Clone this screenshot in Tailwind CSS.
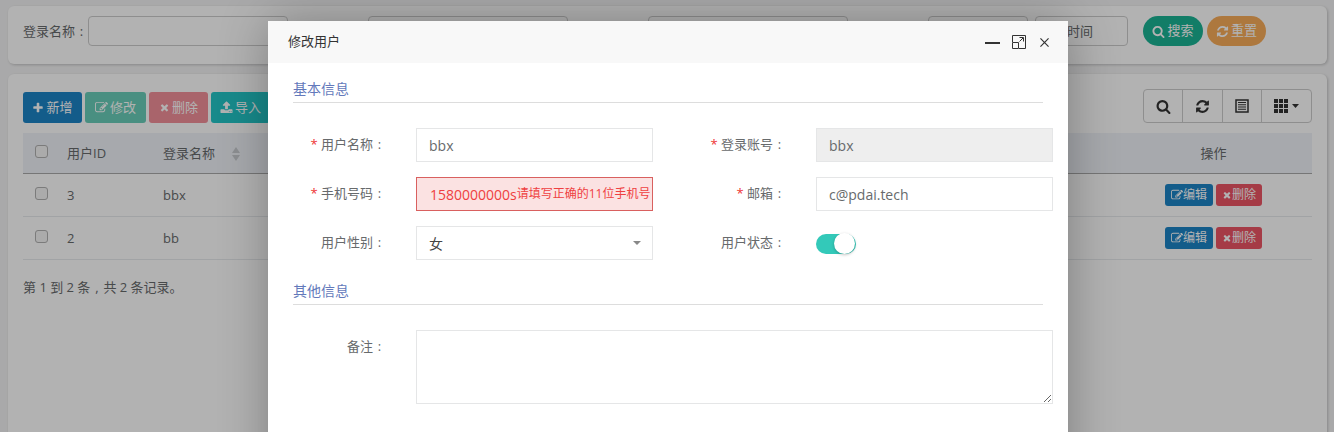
<!DOCTYPE html>
<html lang="zh-CN">
<head>
  <meta charset="UTF-8" />
  <title>修改用户</title>
  <script src="https://cdn.jsdelivr.net/npm/@tailwindcss/browser@4"></script>
</head>
<body class="relative h-[432px] overflow-hidden bg-[#f3f3f4] font-['Open_Sans','Noto_Sans_CJK_SC',sans-serif] text-[13px] text-[#676a6c]">
  <!-- page behind the dialog -->
  <div class="px-[8px] pt-[6px] pr-[7px]">
    <div class="flex h-[58px] items-start rounded-[6px] bg-white px-[15px] pt-[10px] shadow-[1px_1px_3px_rgba(0,0,0,0.2)]">
      <label class="w-[65px] leading-[30px] whitespace-nowrap">登录名称<span class="inline-block w-[13px] text-center">:</span></label>
      <input class="h-[30px] w-[200px] rounded-[4px] border border-[#ccc]" />
      <input class="ml-[80px] h-[30px] w-[200px] rounded-[4px] border border-[#ccc]" />
      <input class="ml-[80px] h-[30px] w-[200px] rounded-[4px] border border-[#ccc]" />
      <div class="ml-[80px] h-[30px] w-[100px] rounded-[4px] border border-[#ccc]"></div>
      <div class="ml-[7px] h-[30px] w-[93px] rounded-[4px] border border-[#ccc] px-[5px] leading-[28px]">结束时间</div>
      <button class="ml-[15px] flex h-[30px] w-[60px] items-center justify-center gap-[2px] rounded-full bg-[#1ab394] text-white">
        <svg class="h-[13px] w-[13px]" viewBox="0 0 1792 1792" fill="currentColor"><path d="M1216 832q0-185-131.5-316.5t-316.5-131.5-316.5 131.5-131.5 316.5 131.5 316.5 316.5 131.5 316.5-131.5 131.5-316.5zm512 832q0 52-38 90t-90 38q-54 0-90-38l-343-342q-179 124-399 124-143 0-273.5-55.5t-225-150-150-225-55.5-273.5 55.5-273.5 150-225 225-150 273.5-55.5 273.5 55.5 225 150 150 225 55.5 273.5q0 220-124 399l343 343q37 37 37 90z"/></svg>搜索
      </button>
      <button class="ml-[4px] flex h-[30px] w-[59px] items-center justify-center gap-[2px] rounded-full bg-[#f8ac59] text-white">
        <svg class="h-[13px] w-[13px]" viewBox="0 0 1792 1792" fill="currentColor"><path d="M1639 1056q0 5-1 7-64 268-268 434.5t-478 166.5q-146 0-282.5-55t-243.5-157l-129 129q-19 19-45 19t-45-19-19-45v-448q0-26 19-45t45-19h448q26 0 45 19t19 45-19 45l-137 137q71 66 161 102t187 36q134 0 250-65t186-179q11-17 53-117 8-23 30-23h192q13 0 22.5 9.5t9.5 22.5zm25-800v448q0 26-19 45t-45 19h-448q-26 0-45-19t-19-45 19-45l138-138q-148-137-349-137-134 0-250 65t-186 179q-11 17-53 117-8 23-30 23h-199q-13 0-22.5-9.5t-9.5-22.5v-7q65-268 270-434.5t480-166.5q146 0 284 55.5t245 156.5l130-129q19-19 45-19t45 19 19 45z"/></svg>重置
      </button>
    </div>

    <div class="mt-[10px] h-[400px] rounded-[6px] bg-white px-[15px] pt-[15px] shadow-[1px_1px_3px_rgba(0,0,0,0.2)]">
      <div class="flex h-[34px] items-start">
        <div class="mt-[3px] flex gap-[3px] text-white">
          <button class="flex h-[31px] w-[59px] items-center justify-center gap-[2px] rounded-[3px] bg-[#1c84c6]">
            <svg class="h-[12px] w-[12px]" viewBox="0 0 1792 1792" fill="currentColor"><path d="M1600 736v192q0 40-28 68t-68 28h-416v416q0 40-28 68t-68 28h-192q-40 0-68-28t-28-68v-416h-416q-40 0-68-28t-28-68v-192q0-40 28-68t68-28h416v-416q0-40 28-68t68-28h192q40 0 68 28t28 68v416h416q40 0 68 28t28 68z"/></svg>新增
          </button>
          <button class="flex h-[31px] w-[61px] items-center justify-center gap-[2px] rounded-[3px] bg-[#1ab394] opacity-65">
            <svg class="h-[13px] w-[13px]" viewBox="0 0 1792 1792" fill="currentColor"><path d="M888 1184l116-116-152-152-116 116v56h96v96h56zm440-720q-16-16-33 1l-350 350q-17 17-1 33t33-1l350-350q17-17 1-33zm80 594v190q0 119-84.5 203.5t-203.5 84.5h-832q-119 0-203.5-84.5t-84.5-203.5v-832q0-119 84.5-203.5t203.5-84.5h832q63 0 117 25 15 7 18 23 3 17-9 29l-49 49q-14 14-32 8-23-6-45-6h-832q-66 0-113 47t-47 113v832q0 66 47 113t113 47h832q66 0 113-47t47-113v-126q0-13 9-22l64-64q15-15 35-7t20 29zm-96-738l288 288-672 672h-288v-288zm444 132l-92 92-288-288 92-92q28-28 68-28t68 28l152 152q28 28 28 68t-28 68z"/></svg>修改
          </button>
          <button class="flex h-[31px] w-[59px] items-center justify-center gap-[2px] rounded-[3px] bg-[#ed5565] opacity-65">
            <svg class="h-[11px] w-[11px]" viewBox="0 0 1792 1792" fill="currentColor"><path d="M1490 1322q0 40-28 68l-136 136q-28 28-68 28t-68-28l-294-294-294 294q-28 28-68 28t-68-28l-136-136q-28-28-28-68t28-68l294-294-294-294q-28-28-28-68t28-68l136-136q28-28 68-28t68 28l294 294 294-294q28-28 68-28t68 28l136 136q28 28 28 68t-28 68l-294 294 294 294q28 28 28 68z"/></svg>删除
          </button>
          <button class="flex h-[31px] w-[59px] items-center justify-center gap-[2px] rounded-[3px] bg-[#23c6c8]">
            <svg class="h-[13px] w-[13px]" viewBox="0 0 1792 1792" fill="currentColor"><path d="M1344 1472q0-26-19-45t-45-19-45 19-19 45 19 45 45 19 45-19 19-45zm256 0q0-26-19-45t-45-19-45 19-19 45 19 45 45 19 45-19 19-45zm128-224v320q0 40-28 68t-68 28h-1472q-40 0-68-28t-28-68v-320q0-40 28-68t68-28h427q21 56 70.5 92t110.5 36h256q61 0 110.5-36t70.5-92h427q40 0 68 28t28 68zm-325-648q-17 40-59 40h-256v448q0 26-19 45t-45 19h-256q-26 0-45-19t-19-45v-448h-256q-42 0-59-40-17-39 14-69l448-448q18-19 45-19t45 19l448 448q31 30 14 69z"/></svg>导入
          </button>
        </div>
        <div class="ml-auto flex h-[34px] rounded-[4px] border border-[#ccc] text-[#333]">
          <div class="flex w-[38px] items-center justify-center">
            <svg class="h-[15px] w-[15px]" viewBox="0 0 1792 1792" fill="currentColor"><path d="M1216 832q0-185-131.5-316.5t-316.5-131.5-316.5 131.5-131.5 316.5 131.5 316.5 316.5 131.5 316.5-131.5 131.5-316.5zm512 832q0 52-38 90t-90 38q-54 0-90-38l-343-342q-179 124-399 124-143 0-273.5-55.5t-225-150-150-225-55.5-273.5 55.5-273.5 150-225 225-150 273.5-55.5 273.5 55.5 225 150 150 225 55.5 273.5q0 220-124 399l343 343q37 37 37 90z"/></svg>
          </div>
          <div class="flex w-[40px] items-center justify-center border-l border-[#ccc]">
            <svg class="h-[15px] w-[15px]" viewBox="0 0 1792 1792" fill="currentColor"><path d="M1639 1056q0 5-1 7-64 268-268 434.5t-478 166.5q-146 0-282.5-55t-243.5-157l-129 129q-19 19-45 19t-45-19-19-45v-448q0-26 19-45t45-19h448q26 0 45 19t19 45-19 45l-137 137q71 66 161 102t187 36q134 0 250-65t186-179q11-17 53-117 8-23 30-23h192q13 0 22.5 9.5t9.5 22.5zm25-800v448q0 26-19 45t-45 19h-448q-26 0-45-19t-19-45 19-45l138-138q-148-137-349-137-134 0-250 65t-186 179q-11 17-53 117-8 23-30 23h-199q-13 0-22.5-9.5t-9.5-22.5v-7q65-268 270-434.5t480-166.5q146 0 284 55.5t245 156.5l130-129q19-19 45-19t45 19 19 45z"/></svg>
          </div>
          <div class="flex w-[39px] items-center justify-center border-l border-[#ccc]">
            <svg class="h-[14px] w-[14px]" viewBox="0 0 14 14" fill="none" stroke="currentColor"><rect x="1" y="1" width="12" height="12" stroke-width="1.5"/><path d="M3 3.500h8M3 5.750h8M3 8h8M3 10.250h8" stroke-width="1.200"/></svg>
          </div>
          <div class="flex w-[50px] items-center justify-center gap-[4px] border-l border-[#ccc]">
            <svg class="h-[14px] w-[14px]" viewBox="0 0 14 14" fill="currentColor"><path d="M0 0h4v4H0zM5 0h4v4H5zM10 0h4v4h-4zM0 5h4v4H0zM5 5h4v4H5zM10 5h4v4h-4zM0 10h4v4H0zM5 10h4v4H5zM10 10h4v4h-4z"/></svg>
            <svg class="h-[4px] w-[7px]" viewBox="0 0 7 4" fill="currentColor"><path d="M0 0h7L3.500 4z"/></svg>
          </div>
        </div>
      </div>

      <table class="mt-[10px] w-[1289px] table-fixed border-collapse">
        <thead>
          <tr class="h-[40px] border-b border-[#aaa] bg-[#eff3f8] text-left">
            <th class="w-[36px] pl-[12px] font-normal"><input type="checkbox" class="mt-[-3px] block h-[13px] w-[13px] appearance-none rounded-[3px] border border-[#b0b0b0] bg-[#f5f5f5]" /></th>
            <th class="w-[96px] px-[8px] pt-[2px] font-normal">用户ID</th>
            <th class="w-[100px] px-[8px] pt-[2px] font-normal">
              <span class="flex items-center gap-[17px] whitespace-nowrap">登录名称
                <svg class="h-[14px] w-[8px]" viewBox="0 0 8 14" fill="#c9ccd0"><path d="M4 0l4 6H0zM0 8h8l-4 6z"/></svg>
              </span>
            </th>
            <th class="font-normal"></th>
            <th class="w-[197px] pt-[2px] text-center font-normal">操作</th>
          </tr>
        </thead>
        <tbody>
          <tr class="h-[43px] border-b border-[#e7eaec]">
            <td class="pl-[12px]"><input type="checkbox" class="mt-[-3px] block h-[13px] w-[13px] appearance-none rounded-[3px] border border-[#b0b0b0] bg-[#f5f5f5]" /></td>
            <td class="px-[8px] pt-[2px]">3</td>
            <td class="px-[8px] pt-[2px]">bbx</td>
            <td></td>
            <td class="pt-[1px]">
              <div class="flex justify-center gap-[3px] text-[12px] text-white">
                <span class="flex h-[22px] w-[48px] items-center justify-center rounded-[3px] bg-[#1c84c6]">
                  <svg class="h-[12px] w-[12px]" viewBox="0 0 1792 1792" fill="currentColor"><path d="M888 1184l116-116-152-152-116 116v56h96v96h56zm440-720q-16-16-33 1l-350 350q-17 17-1 33t33-1l350-350q17-17 1-33zm80 594v190q0 119-84.5 203.5t-203.5 84.5h-832q-119 0-203.5-84.5t-84.5-203.5v-832q0-119 84.5-203.5t203.5-84.5h832q63 0 117 25 15 7 18 23 3 17-9 29l-49 49q-14 14-32 8-23-6-45-6h-832q-66 0-113 47t-47 113v832q0 66 47 113t113 47h832q66 0 113-47t47-113v-126q0-13 9-22l64-64q15-15 35-7t20 29zm-96-738l288 288-672 672h-288v-288zm444 132l-92 92-288-288 92-92q28-28 68-28t68 28l152 152q28 28 28 68t-28 68z"/></svg>编辑
                </span>
                <span class="flex h-[22px] w-[46px] items-center justify-center rounded-[3px] bg-[#ed5565]">
                  <svg class="h-[10px] w-[10px]" viewBox="0 0 1792 1792" fill="currentColor"><path d="M1490 1322q0 40-28 68l-136 136q-28 28-68 28t-68-28l-294-294-294 294q-28 28-68 28t-68-28l-136-136q-28-28-28-68t28-68l294-294-294-294q-28-28-28-68t28-68l136-136q28-28 68-28t68 28l294 294 294-294q28-28 68-28t68 28l136 136q28 28 28 68t-28 68l-294 294 294 294q28 28 28 68z"/></svg>删除
                </span>
              </div>
            </td>
          </tr>
          <tr class="h-[43px] border-b border-[#e7eaec]">
            <td class="pl-[12px]"><input type="checkbox" class="mt-[-3px] block h-[13px] w-[13px] appearance-none rounded-[3px] border border-[#b0b0b0] bg-[#f5f5f5]" /></td>
            <td class="px-[8px] pt-[2px]">2</td>
            <td class="px-[8px] pt-[2px]">bb</td>
            <td></td>
            <td class="pt-[1px]">
              <div class="flex justify-center gap-[3px] text-[12px] text-white">
                <span class="flex h-[22px] w-[48px] items-center justify-center rounded-[3px] bg-[#1c84c6]">
                  <svg class="h-[12px] w-[12px]" viewBox="0 0 1792 1792" fill="currentColor"><path d="M888 1184l116-116-152-152-116 116v56h96v96h56zm440-720q-16-16-33 1l-350 350q-17 17-1 33t33-1l350-350q17-17 1-33zm80 594v190q0 119-84.5 203.5t-203.5 84.5h-832q-119 0-203.5-84.5t-84.5-203.5v-832q0-119 84.5-203.5t203.5-84.5h832q63 0 117 25 15 7 18 23 3 17-9 29l-49 49q-14 14-32 8-23-6-45-6h-832q-66 0-113 47t-47 113v832q0 66 47 113t113 47h832q66 0 113-47t47-113v-126q0-13 9-22l64-64q15-15 35-7t20 29zm-96-738l288 288-672 672h-288v-288zm444 132l-92 92-288-288 92-92q28-28 68-28t68 28l152 152q28 28 28 68t-28 68z"/></svg>编辑
                </span>
                <span class="flex h-[22px] w-[46px] items-center justify-center rounded-[3px] bg-[#ed5565]">
                  <svg class="h-[10px] w-[10px]" viewBox="0 0 1792 1792" fill="currentColor"><path d="M1490 1322q0 40-28 68l-136 136q-28 28-68 28t-68-28l-294-294-294 294q-28 28-68 28t-68-28l-136-136q-28-28-28-68t28-68l294-294-294-294q-28-28-28-68t28-68l136-136q28-28 68-28t68 28l294 294 294-294q28-28 68-28t68 28l136 136q28 28 28 68t-28 68l-294 294 294 294q28 28 28 68z"/></svg>删除
                </span>
              </div>
            </td>
          </tr>
        </tbody>
      </table>
      <p class="mt-[17px] leading-[20px]">第 1 到 2 条<span class="inline-block w-[13px] text-center">,</span>共 2 条记录。</p>
    </div>
  </div>

  <!-- dim layer -->
  <div class="absolute inset-0 bg-black/30"></div>

  <!-- dialog -->
  <div class="absolute top-[21px] left-[268px] h-[600px] w-[800px] rounded-[2px] bg-white shadow-[1px_1px_50px_rgba(0,0,0,0.3)]">
    <div class="flex h-[42px] items-center bg-[#f8f8f8] pr-[19px] pl-[20px] text-[#333]">
      <span>修改用户</span>
      <div class="ml-auto flex items-center gap-[12px]">
        <svg class="h-[15px] w-[15px]" viewBox="0 0 15 15" stroke="#333" stroke-width="2"><path d="M0 8h15"/></svg>
        <svg class="h-[14px] w-[14px]" viewBox="0 0 14 14" fill="none" stroke="#333"><path d="M.5 7V.5H13.500V13.500H7M.5 7.500H6.500V13.500H.5zM7.500 6.500L11 3M7.500 2.500H11.500V6.500"/></svg>
        <svg class="ml-[2px] h-[9px] w-[9px]" viewBox="0 0 10 10" fill="none" stroke="#333" stroke-width="1.300"><path d="M.5 .5l9 9M9.500 .5l-9 9"/></svg>
      </div>
    </div>

    <div class="px-[25px] pt-[16px]">
      <h4 class="border-b border-[#ddd] pb-[3px] text-[14px] leading-[20px] font-normal text-[#6379bb]">基本信息</h4>
    </div>
    <div class="mt-[25px] grid grid-cols-[385px_400px] gap-y-[15px]">
      <div class="flex">
        <label class="w-[148px] pr-[30px] text-right leading-[32px]"><span class="text-[#e33]">*</span> 用户名称<span class="inline-block w-[13px] text-center">:</span></label>
        <input value="bbx" readonly class="h-[34px] flex-1 border border-[#e5e6e7] px-[12px] text-[14px] text-[#676a6c]" />
      </div>
      <div class="flex">
        <label class="w-[163px] pr-[30px] text-right leading-[32px]"><span class="text-[#e33]">*</span> 登录账号<span class="inline-block w-[13px] text-center">:</span></label>
        <input value="bbx" readonly class="h-[34px] flex-1 border border-[#e5e6e7] bg-[#eee] px-[12px] text-[14px] text-[#676a6c]" />
      </div>
      <div class="flex">
        <label class="w-[148px] pr-[30px] text-right leading-[32px]"><span class="text-[#e33]">*</span> 手机号码<span class="inline-block w-[13px] text-center">:</span></label>
        <div class="flex h-[34px] min-w-0 flex-1 items-center overflow-hidden border border-[#d9605f] bg-[#fbe2e2] pl-[13px] text-[14px] whitespace-nowrap text-[#ef4040]">1580000000s<span class="text-[12px]">请填写正确的11位手机号</span></div>
      </div>
      <div class="flex">
        <label class="w-[163px] pr-[30px] text-right leading-[32px]"><span class="text-[#e33]">*</span> 邮箱<span class="inline-block w-[13px] text-center">:</span></label>
        <input value="c@pdai.tech" readonly class="h-[34px] flex-1 border border-[#e5e6e7] px-[12px] text-[14px] text-[#676a6c]" />
      </div>
      <div class="flex">
        <label class="w-[148px] pr-[30px] text-right leading-[32px]">用户性别<span class="inline-block w-[13px] text-center">:</span></label>
        <div class="flex h-[34px] flex-1 items-center justify-between border border-[#e5e6e7] pr-[11px] pl-[12px] text-[14px] text-[#444]">女
          <svg class="h-[4px] w-[8px]" viewBox="0 0 8 4" fill="#888"><path d="M0 0h8L4 4z"/></svg>
        </div>
      </div>
      <div class="flex">
        <label class="w-[163px] pr-[30px] text-right leading-[32px]">用户状态<span class="inline-block w-[13px] text-center">:</span></label>
        <div class="mt-[8px] h-[20px] w-[40px] rounded-full bg-[#33c9b9]">
          <div class="mt-[-1px] ml-[18px] inline-block h-[21px] w-[21px] rounded-full bg-white align-top shadow-[0_1px_3px_rgba(0,0,0,0.25)]"></div>
        </div>
      </div>
    </div>

    <div class="mt-[21px] px-[25px]">
      <h4 class="border-b border-[#ddd] pb-[3px] text-[14px] leading-[20px] font-normal text-[#6379bb]">其他信息</h4>
    </div>
    <div class="mt-[25px] flex pr-[15px]">
      <label class="w-[148px] pt-[6px] pr-[30px] text-right leading-[20px]">备注<span class="inline-block w-[13px] text-center">:</span></label>
      <textarea class="h-[74px] flex-1 border border-[#e5e6e7]"></textarea>
    </div>
  </div>
</body>
</html>
